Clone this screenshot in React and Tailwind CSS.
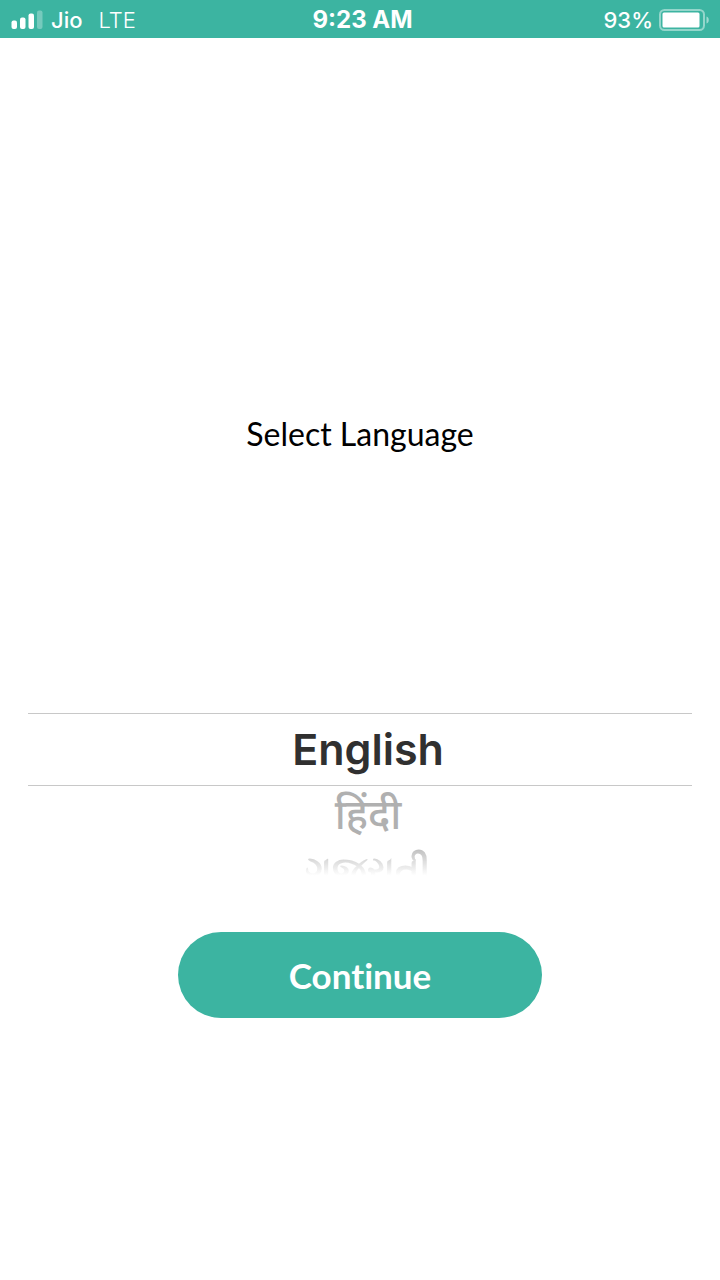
import { useState } from "react";

function SignalIcon() {
  return (
    <svg className="h-5 w-8 shrink-0" viewBox="0 0 32 20" fill="#fff" aria-hidden="true">
      <rect x="0.500" y="10.500" width="5.500" height="8.500" rx="2" />
      <rect x="9" y="7.500" width="5.500" height="11.500" rx="2" />
      <rect x="17.500" y="3.500" width="5.500" height="15.500" rx="2" />
      <rect x="26" y="0.500" width="5.500" height="18.500" rx="2" opacity="0.3" />
    </svg>
  );
}

function BatteryIcon() {
  return (
    <svg className="h-6 w-[51px] shrink-0" viewBox="0 0 51 24" fill="none" aria-hidden="true">
      <rect x="1" y="2" width="44" height="20" rx="4.500" stroke="#fff" strokeOpacity="0.45" strokeWidth="2" />
      <rect x="3.500" y="4.500" width="37" height="15" rx="1.500" fill="#fff" />
      <path d="M47.500 8.500c3 .6 3 6.400 0 7z" fill="#fff" fillOpacity="0.5" />
    </svg>
  );
}

function StatusBar() {
  return (
    <header className="grid h-[38px] grid-cols-3 items-center bg-[#3cb4a1] pl-[11px] pr-[10px] pt-px font-['Inter',sans-serif] text-[22px] leading-6 text-white">
      <div className="flex items-center gap-2">
        <SignalIcon />
        <span className="font-medium">Jio</span>
        <span className="ml-2 font-light">LTE</span>
      </div>
      <span className="pl-1 text-center text-2xl leading-6 font-bold">9:23 AM</span>
      <div className="flex items-center justify-end gap-[6px]">
        <span className="font-medium">93%</span>
        <BatteryIcon />
      </div>
    </header>
  );
}

const languages = [
  {
    id: "en",
    label: "English",
    row: "h-[73px] border-y border-[#c8c8c8] text-[43px]",
    text: "font-semibold text-[#303030]",
  },
  {
    id: "hi",
    label: "हिंदी",
    row: "h-14 text-[41px] leading-[56px]",
    text: "font-medium text-[#b0b0b0]",
  },
  {
    id: "gu",
    label: "ગુજરાતી",
    row: "h-14 text-[37px] leading-[56px]",
    text: "bg-linear-to-b from-[#bcbcbc] from-10% to-transparent to-60% bg-clip-text font-semibold text-transparent",
  },
];

export default function App() {
  const [language, setLanguage] = useState("en");

  return (
    <div className="flex min-h-screen flex-col bg-white">
      <StatusBar />
      <main className="flex flex-1 flex-col items-center">
        <h1 className="mt-[376px] font-['Lato',sans-serif] text-[32px] leading-10 text-black [font-variant-ligatures:none]">
          Select Language
        </h1>
        <div
          role="radiogroup"
          aria-label="Language"
          className="mt-[259px] w-full px-7 font-['Inter','Noto_Sans',sans-serif]"
        >
          {languages.map(({ id, label, row, text }) => (
            <label key={id} className={"flex cursor-pointer items-center justify-center pl-4 " + row}>
              <input
                type="radio"
                name="language"
                value={id}
                checked={language === id}
                onChange={() => setLanguage(id)}
                className="sr-only"
              />
              <span className={text}>{label}</span>
            </label>
          ))}
        </div>
        <button
          type="button"
          className="mt-[34px] h-[86px] w-[364px] rounded-full bg-[#3cb4a1] font-['Lato',sans-serif] text-[35px] font-bold text-white [font-variant-ligatures:none]"
        >
          Continue
        </button>
      </main>
    </div>
  );
}
